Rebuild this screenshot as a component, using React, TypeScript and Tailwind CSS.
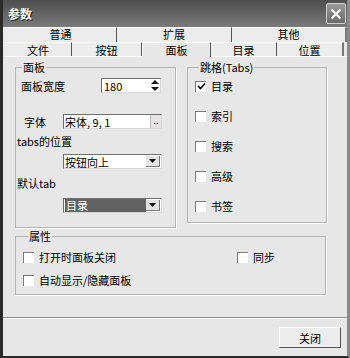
import React from "react";

const font = "font-['Noto_Sans_CJK_SC','Noto_Sans',sans-serif]";

function Check({ checked }: { checked?: boolean }) {
  return (
    <span className="w-[11px] h-[11px] shrink-0 bg-white border-t border-l border-t-[#7a7a7a] border-l-[#7a7a7a] flex items-center justify-center">
      {checked && (
        <svg width="9" height="9" viewBox="0 0 9 9">
          <path d="M1 4 L3.5 6.5 L8 1.5" stroke="#111" strokeWidth="1.8" fill="none" />
        </svg>
      )}
    </span>
  );
}

function DropArrow() {
  return (
    <span className="w-[14px] h-[11px] bg-[#e4e4e4] border-r border-b border-[#777] flex items-center justify-center">
      <svg width="7" height="4" viewBox="0 0 7 4">
        <path d="M0 0 H7 L3.5 4 Z" fill="#111" />
      </svg>
    </span>
  );
}

function Sunken({ className, children }: { className?: string; children?: React.ReactNode }) {
  return (
    <div className={`bg-white border-t border-l border-t-[#6e6e6e] border-l-[#6e6e6e] border-r border-b border-r-[#d8d8d8] border-b-[#d8d8d8] flex items-center ${className ?? ""}`}>
      {children}
    </div>
  );
}

const Tab = ({ label, w, last, top }: { label: string; w: string; last?: boolean; top?: boolean }) => (
  <div className={`${w} h-full flex items-center justify-center leading-[12px] bg-[#ececec] border-t border-t-white ${top ? "pb-[2px]" : ""} ${last ? "border-r-2 border-r-[#777]" : "border-r border-r-[#555]"}`}>
    {label}
  </div>
);

export default function App() {
  return (
    <div className={`w-[350px] h-[358px] bg-[#e7e7e7] flex flex-col border-l-[3px] border-l-[#2a2a2a] border-b-2 border-b-[#2a2a2a] border-r-[3px] border-r-[#8a8a8a] text-[11px] leading-[14px] text-black ${font}`}>
      {/* title bar */}
      <div className="h-[27px] shrink-0 bg-gradient-to-b from-[#4e4e4e] to-[#7a7a7a] flex items-center justify-between pl-[5px] pr-[1px]">
        <span className="text-white text-[12px] font-bold [text-shadow:1px_1px_0_#222]">参数</span>
        <div className="w-[20px] h-[21px] rounded-[2px] border border-[#cfcfcf] bg-gradient-to-b from-[#9a9a9a] to-[#6a6a6a] flex items-center justify-center">
          <svg width="12" height="12" viewBox="0 0 12 12">
            <path d="M1.5 1.5 L10.5 10.5 M10.5 1.5 L1.5 10.5" stroke="#fff" strokeWidth="2" />
          </svg>
        </div>
      </div>

      {/* tabs */}
      <div className="h-[30px] shrink-0 flex flex-col pl-[2px] bg-[#e7e7e7]">
        <div className="h-[15px] flex">
          <Tab label="普通" w="w-[112px]" top />
          <Tab label="扩展" w="w-[115px]" top />
          <Tab label="其他" w="w-[115px]" top last />
        </div>
        <div className="h-[15px] flex items-end border-b border-b-white">
          <Tab label="文件" w="w-[67px]" />
          <Tab label="按钮" w="w-[70px]" />
          <div className="w-[69px] h-[15px] -mb-[1px] pt-[1px] flex items-start justify-center leading-[12px] bg-[#e7e7e7] border-t border-l border-t-white border-l-white border-r border-r-[#555]">
            面板
          </div>
          <Tab label="目录" w="w-[66px]" />
          <Tab label="位置" w="w-[67px]" last />
        </div>
      </div>

      {/* content */}
      <div className="flex-1 flex flex-col pt-[3px] pl-[12px] pr-[20px]">
        <div className="flex gap-[11px]">
          <fieldset className="w-[161px] h-[168px] border border-[#b4b4b4] shadow-[1px_1px_0_#fff] pl-[5px]">
            <legend className="ml-[1px] px-[1px]">面板</legend>
            <div className="mt-[4px] h-[15px] flex items-center">
              <span className="w-[80px]">面板宽度</span>
              <Sunken className="w-[60px] h-[15px] justify-between pl-[2px] pr-[1px]">
                <span>180</span>
                <svg width="8" height="11" viewBox="0 0 8 11">
                  <path d="M0 4 L4 0 L8 4 Z M0 7 L4 11 L8 7 Z" fill="#111" />
                </svg>
              </Sunken>
            </div>
            <div className="mt-[21px] h-[15px] flex items-center">
              <span className="w-[42px] pl-[3px]">字体</span>
              <Sunken className="w-[99px] h-[15px] justify-between pl-[1px]">
                <span>宋体, 9, 1</span>
                <span className="w-[11px] h-[13px] bg-[#e4e4e4] border-l border-[#bbb] text-[9px] leading-[12px] text-center">..</span>
              </Sunken>
            </div>
            <div className="mt-[5px] h-[14px] -ml-[4px]">tabs的位置</div>
            <div className="mt-[6px] h-[15px] flex">
              <Sunken className="ml-[42px] w-[99px] h-[15px] justify-between pl-[1px] pr-[1px]">
                <span>按钮向上</span>
                <DropArrow />
              </Sunken>
            </div>
            <div className="mt-[7px] h-[14px] -ml-[4px]">默认tab</div>
            <div className="mt-[8px] h-[15px] flex">
              <Sunken className="ml-[42px] w-[99px] h-[15px] justify-between pl-[1px] pr-[1px]">
                <span className="w-[81px] h-[13px] bg-[#626262] text-white pl-[1px] leading-[13px]">目录</span>
                <DropArrow />
              </Sunken>
            </div>
          </fieldset>

          <fieldset className="w-[140px] h-[163px] border border-[#b4b4b4] shadow-[1px_1px_0_#fff] pl-[7px]">
            <legend className="ml-[4px] px-[1px]">跳格(Tabs)</legend>
            {["目录", "索引", "搜索", "高级", "书签"].map((t, i) => (
              <div key={t} className={`h-[14px] flex items-center gap-[5px] ${i === 0 ? "mt-[5px]" : "mt-[16px]"}`}>
                <Check checked={i === 0} />
                <span>{t}</span>
              </div>
            ))}
          </fieldset>
        </div>

        <fieldset className="mt-[1px] w-[311px] h-[66px] border border-[#b4b4b4] shadow-[1px_1px_0_#fff] pl-[7px]">
          <legend className="ml-[5px] px-[1px]">属性</legend>
          <div className="mt-[7px] h-[14px] flex items-center">
            <div className="w-[214px] flex items-center gap-[5px]">
              <Check />
              <span>打开时面板关闭</span>
            </div>
            <div className="flex items-center gap-[5px]">
              <Check />
              <span>同步</span>
            </div>
          </div>
          <div className="mt-[9px] h-[14px] flex items-center gap-[5px]">
            <Check />
            <span>自动显示/隐藏面板</span>
          </div>
        </fieldset>
      </div>

      {/* footer */}
      <div className="h-[39px] shrink-0 border-t border-t-[#8c8c8c] shadow-[inset_0_1px_0_#fff] flex items-start justify-end pr-[6px] pt-[9px]">
        <button className="w-[62px] h-[21px] bg-[#ececec] border border-t-white border-l-white border-r-[#555] border-b-[#555] text-[11px]">
          关闭
        </button>
      </div>
    </div>
  );
}
